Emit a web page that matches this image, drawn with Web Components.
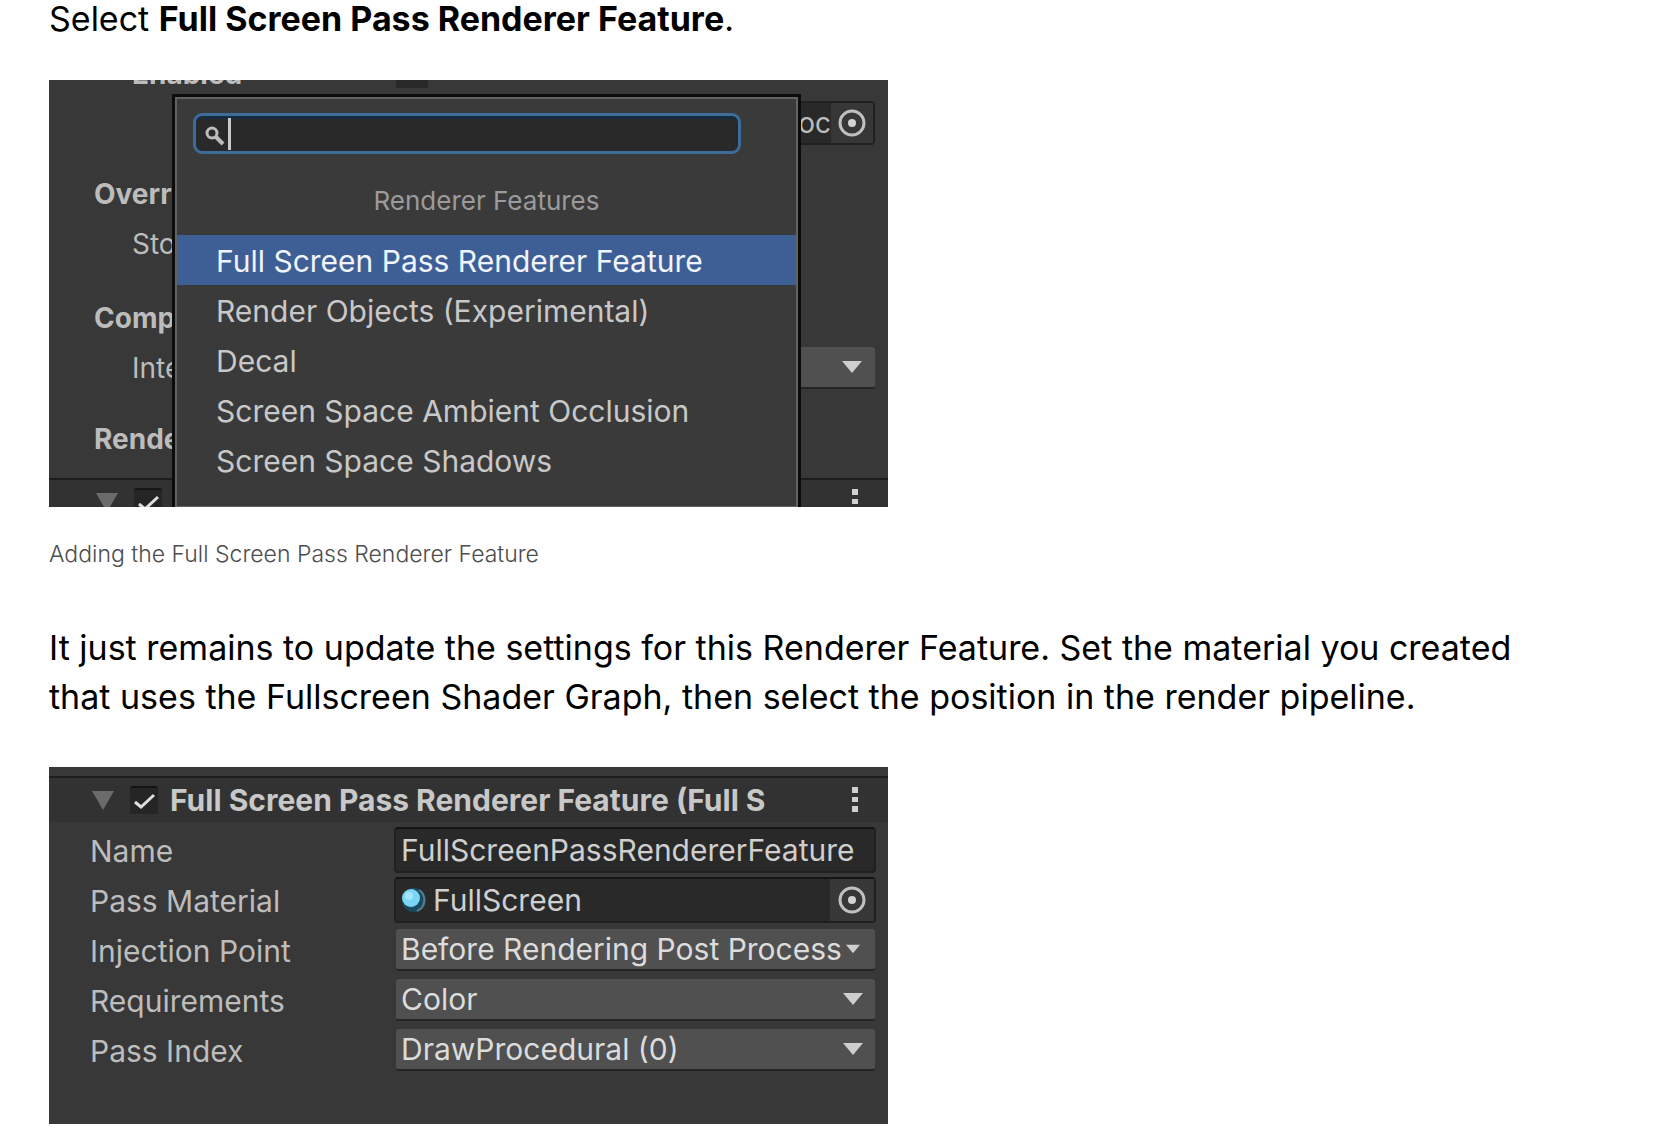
<!DOCTYPE html>
<html lang="en">
<head>
<meta charset="utf-8">
<meta name="viewport" content="width=device-width, initial-scale=1">
<title>Full Screen Pass Renderer Feature</title>
<style>
  body {
    margin: 0;
    background: #fff;
    color: #000;
    font-family: Inter, "Liberation Sans", sans-serif;
  }
</style>
</head>
<body>
<doc-article>
  <doc-text>Select <b>Full Screen Pass Renderer Feature</b>.</doc-text>

  <doc-figure caption="Adding the Full Screen Pass Renderer Feature">
    <inspector-backdrop>
      <feature-picker heading="Renderer Features">
        <picker-option selected>Full Screen Pass Renderer Feature</picker-option>
        <picker-option>Render Objects (Experimental)</picker-option>
        <picker-option>Decal</picker-option>
        <picker-option>Screen Space Ambient Occlusion</picker-option>
        <picker-option>Screen Space Shadows</picker-option>
      </feature-picker>
    </inspector-backdrop>
  </doc-figure>

  <doc-text>It just remains to update the settings for this Renderer Feature. Set the material you created that uses the Fullscreen Shader Graph, then select the position in the render pipeline.</doc-text>

  <doc-figure>
    <feature-inspector heading="Full Screen Pass Renderer Feature (Full S">
      <inspector-row label="Name" type="text" value="FullScreenPassRendererFeature"></inspector-row>
      <inspector-row label="Pass Material" type="object" value="FullScreen"></inspector-row>
      <inspector-row label="Injection Point" type="select" value="Before Rendering Post Process" tight></inspector-row>
      <inspector-row label="Requirements" type="select" value="Color"></inspector-row>
      <inspector-row label="Pass Index" type="select" value="DrawProcedural (0)"></inspector-row>
    </feature-inspector>
  </doc-figure>
</doc-article>

<script>
const icons = {
  target: `<svg width="28" height="28" viewBox="0 0 28 28" aria-hidden="true">
    <circle cx="14" cy="14" r="12" fill="none" stroke="#c0c0c0" stroke-width="3"/>
    <circle cx="14" cy="14" r="4" fill="#d2d2d2"/></svg>`,
  arrow: `<svg class="arrow" width="20" height="12" viewBox="0 0 20 12" aria-hidden="true">
    <path d="M0 0h20L10 12z" fill="#cfcfcf"/></svg>`,
  fold: `<svg width="22" height="19" viewBox="0 0 22 19" aria-hidden="true">
    <path d="M0 0h22L11 19z" fill="#6b6b6b"/></svg>`,
  dots: `<svg width="6" height="26" viewBox="0 0 6 26" aria-hidden="true">
    <path d="M0 0h6v6H0zM0 10h6v5H0zM0 19h6v6H0z" fill="#d0d0d0"/></svg>`,
  search: `<svg width="20" height="20" viewBox="0 0 20 20" aria-hidden="true">
    <circle cx="7" cy="7" r="5" fill="none" stroke="#bdbdbd" stroke-width="3"/>
    <path d="M11 11l7 7" stroke="#bdbdbd" stroke-width="4"/></svg>`,
  material: `<svg width="26" height="26" viewBox="0 0 26 26" aria-hidden="true">
    <circle cx="13" cy="13" r="12" fill="#184a61"/>
    <path d="M18 3a12 12 0 0 1-2 21" fill="none" stroke="#5b7c8c" stroke-width="2"/>
    <circle cx="10" cy="11" r="9" fill="#7dd5f5"/>
    <circle cx="8" cy="9" r="4" fill="#a3e6fb"/></svg>`
};

// Shared by the two panels, which both have a foldout header
const headerStyles = `
  header {
    display: flex;
    align-items: center;
    box-sizing: border-box;
    height: 46px;
    padding: 0 30px 0 43px;
    background: #323232;
    border-top: 2px solid #1d1d1d;
    color: #c8c8c8;
    font-size: 30px;
    font-weight: 700;
  }
  .fold, .menu {
    display: flex;
    flex: none;
    padding: 0;
    border: 0;
    background: none;
  }
  .tick {
    appearance: none;
    flex: none;
    width: 28px;
    height: 28px;
    margin: 0 12px 0 16px;
    border-top: 2px solid #151515;
    border-radius: 3px;
    background: #252525 url('data:image/svg+xml,<svg xmlns="http://www.w3.org/2000/svg" viewBox="0 0 28 26"><path d="M5 14l6 5L24 7" fill="none" stroke="%23dedede" stroke-width="3"/></svg>') center / contain no-repeat;
  }
  .title {
    flex: 1;
    min-width: 0;
    overflow: hidden;
    white-space: nowrap;
  }
`;

function header(title) {
  return `
    <header>
      <button class="fold" aria-label="Collapse">${icons.fold}</button>
      <input class="tick" type="checkbox" checked aria-label="Active">
      <span class="title">${title}</span>
      <button class="menu" aria-label="More options">${icons.dots}</button>
    </header>`;
}

class DocArticle extends HTMLElement {
  constructor() {
    super();
    this.attachShadow({ mode: 'open' }).innerHTML = `
      <style>
        :host {
          display: block;
          padding: 0 48px 24px 49px;
        }
        main {
          display: flex;
          flex-direction: column;
        }
      </style>
      <main><slot></slot></main>
    `;
  }
}

class DocText extends HTMLElement {
  constructor() {
    super();
    this.attachShadow({ mode: 'open' }).innerHTML = `
      <style>
        :host {
          display: block;
          max-width: 1520px;
          font-size: 34px;
          line-height: 49px;
        }
        p {
          margin: 0;
          padding-bottom: 46px;
        }
        :host(:first-child) {
          margin-top: -6px;
        }
        :host(:first-child) p {
          padding-bottom: 37px;
        }
      </style>
      <p><slot></slot></p>
    `;
  }
}

class DocFigure extends HTMLElement {
  connectedCallback() {
    const caption = this.getAttribute('caption');
    this.attachShadow({ mode: 'open' }).innerHTML = `
      <style>
        :host {
          display: block;
        }
        figure {
          margin: 0;
        }
        .frame {
          max-width: 839px;
          overflow: hidden;
        }
        figcaption {
          padding: 31px 0 53px;
          color: #4d4d4d;
          font-size: 23px;
          font-weight: 300;
          line-height: 32px;
        }
      </style>
      <figure>
        <div class="frame"><slot></slot></div>
        ${caption ? `<figcaption>${caption}</figcaption>` : ''}
      </figure>
    `;
  }
}

class InspectorBackdrop extends HTMLElement {
  constructor() {
    super();
    this.attachShadow({ mode: 'open' }).innerHTML = `
      <style>
        ${headerStyles}
        :host {
          display: block;
          position: relative;
          height: 427px;
          overflow: hidden;
          background: #383838;
          color: #bcbcbc;
          font-size: 28px;
        }
        .row {
          display: flex;
          align-items: center;
          justify-content: space-between;
          height: 50px;
          padding: 0 13px 0 45px;
        }
        .sub {
          padding-left: 83px;
        }
        .strong {
          font-weight: 700;
        }
        .cut {
          align-items: flex-end;
          justify-content: flex-start;
          gap: 154px;
          height: 8px;
          margin-bottom: 10px;
          line-height: 28px;
        }
        .box {
          width: 32px;
          height: 8px;
          background: #292929;
        }
        .object {
          display: flex;
          align-items: center;
          justify-content: flex-end;
          box-sizing: border-box;
          width: 120px;
          height: 44px;
          margin-left: auto;
          border: 2px solid #202020;
          border-radius: 4px;
          background: #292929;
        }
        .object button {
          display: flex;
          align-items: center;
          justify-content: center;
          width: 42px;
          height: 40px;
          padding: 0;
          border: 0;
          background: #373737;
        }
        .drop {
          display: flex;
          align-items: center;
          justify-content: flex-end;
          width: 120px;
          height: 42px;
          padding: 0 13px 0 0;
          border: 0;
          border-bottom: 2px solid #252525;
          border-radius: 3px;
          background: #505050;
        }
        .group {
          margin-top: 24px;
        }
        .group.first, .group.last {
          margin-top: 21px;
        }
        header {
          margin-top: 14px;
          padding-left: 47px;
        }
      </style>
      <div class="row sub strong cut"><span>Enabled</span><span class="box"></span></div>
      <div class="row">
        <div class="object">oc<button aria-label="Pick object">${icons.target}</button></div>
      </div>
      <div class="row strong group first">Overr</div>
      <div class="row sub">Sto</div>
      <div class="row strong group">Comp</div>
      <div class="row sub">Inte<button class="drop" aria-label="Intermediate Texture">${icons.arrow}</button></div>
      <div class="row strong group last">Rende</div>
      ${header('')}
      <slot></slot>
    `;
  }
}

class FeaturePicker extends HTMLElement {
  connectedCallback() {
    this.attachShadow({ mode: 'open' }).innerHTML = `
      <style>
        :host {
          position: absolute;
          inset: 14px 87px -4px 123px;
          box-sizing: border-box;
          border: 3px solid #0c0c0c;
          background: #3a3a3a;
          color: #c8c8c8;
          font-size: 30px;
        }
        .panel {
          height: 100%;
          box-sizing: border-box;
          border: 2px solid #626262;
        }
        .search {
          display: flex;
          align-items: center;
          box-sizing: border-box;
          height: 41px;
          margin: 14px 55px 0 16px;
          padding: 0 9px;
          border: 3px solid #3c6c99;
          border-radius: 9px;
          background: #292929;
          box-shadow: inset 0 3px 2px #172c40;
        }
        .search svg {
          flex: none;
          margin-top: 4px;
        }
        .caret {
          flex: none;
          width: 3px;
          height: 32px;
          margin-left: 3px;
          background: #c9c9c9;
        }
        input {
          flex: 1;
          min-width: 0;
          border: 0;
          outline: 0;
          background: none;
          color: inherit;
          font: inherit;
        }
        h2 {
          margin: 31px 0 18px;
          color: #9b9b9b;
          font-size: 26px;
          font-weight: 400;
          line-height: 32px;
          text-align: center;
        }
      </style>
      <div class="panel">
        <div class="search">
          ${icons.search}
          <span class="caret"></span>
          <input type="text" aria-label="Search">
        </div>
        <h2>${this.getAttribute('heading')}</h2>
        <slot></slot>
      </div>
    `;
  }
}

class PickerOption extends HTMLElement {
  constructor() {
    super();
    this.attachShadow({ mode: 'open' }).innerHTML = `
      <style>
        :host {
          display: block;
        }
        button {
          display: block;
          width: 100%;
          height: 50px;
          padding: 2px 0 0 39px;
          border: 0;
          background: none;
          color: inherit;
          font: inherit;
          text-align: left;
          white-space: nowrap;
        }
        :host([selected]) button {
          background: #3e5f96;
          color: #f0f4fc;
        }
      </style>
      <button><slot></slot></button>
    `;
  }
}

class FeatureInspector extends HTMLElement {
  connectedCallback() {
    this.attachShadow({ mode: 'open' }).innerHTML = `
      <style>
        ${headerStyles}
        :host {
          display: block;
          padding: 9px 0 49px;
          background: #383838;
        }
        .rows {
          padding: 3px 12px 0 41px;
        }
      </style>
      ${header(this.getAttribute('heading'))}
      <div class="rows"><slot></slot></div>
    `;
  }
}

class InspectorRow extends HTMLElement {
  control() {
    const value = this.getAttribute('value');
    switch (this.getAttribute('type')) {
      case 'select':
        return `<div class="field drop">
          <select id="control"><option>${value}</option></select>${icons.arrow}</div>`;
      case 'object':
        return `<div class="field object">${icons.material}
          <input id="control" type="text" value="${value}" readonly>
          <button aria-label="Pick material">${icons.target}</button></div>`;
      default:
        return `<div class="field"><input id="control" type="text" value="${value}"></div>`;
    }
  }

  connectedCallback() {
    this.attachShadow({ mode: 'open' }).innerHTML = `
      <style>
        :host {
          display: grid;
          grid-template-columns: 304px 1fr;
          align-items: center;
          height: 50px;
          color: #bdbdbd;
          font-size: 30px;
        }
        label {
          padding-top: 2px;
        }
        .field {
          display: flex;
          align-items: center;
          box-sizing: border-box;
          min-width: 0;
          height: 46px;
          border: 2px solid #202020;
          border-top-color: #141414;
          border-radius: 4px;
          background: #292929;
          color: #cfcfcf;
        }
        input, select {
          appearance: none;
          flex: 1;
          box-sizing: border-box;
          min-width: 0;
          height: 100%;
          padding: 0 0 0 5px;
          border: 0;
          outline: 0;
          background: none;
          color: inherit;
          font: inherit;
        }
        .object {
          padding-left: 5px;
        }
        .object svg {
          flex: none;
        }
        .object input {
          padding-left: 6px;
        }
        .object button {
          display: flex;
          align-items: center;
          justify-content: center;
          width: 44px;
          height: 100%;
          padding: 0;
          border: 0;
          background: #373737;
        }
        .drop {
          height: 42px;
          margin: 0 1px 0 2px;
          padding-right: 12px;
          border: 0;
          border-bottom: 2px solid #252525;
          border-radius: 3px;
          background: #505050;
          color: #dcdcdc;
        }
        .arrow {
          flex: none;
        }
        :host([tight]) .drop {
          padding-right: 15px;
        }
        :host([tight]) .arrow {
          width: 14px;
        }
      </style>
      <label for="control">${this.getAttribute('label')}</label>
      ${this.control()}
    `;
  }
}

customElements.define('doc-article', DocArticle);
customElements.define('doc-text', DocText);
customElements.define('doc-figure', DocFigure);
customElements.define('inspector-backdrop', InspectorBackdrop);
customElements.define('feature-picker', FeaturePicker);
customElements.define('picker-option', PickerOption);
customElements.define('feature-inspector', FeatureInspector);
customElements.define('inspector-row', InspectorRow);
</script>
</body>
</html>
